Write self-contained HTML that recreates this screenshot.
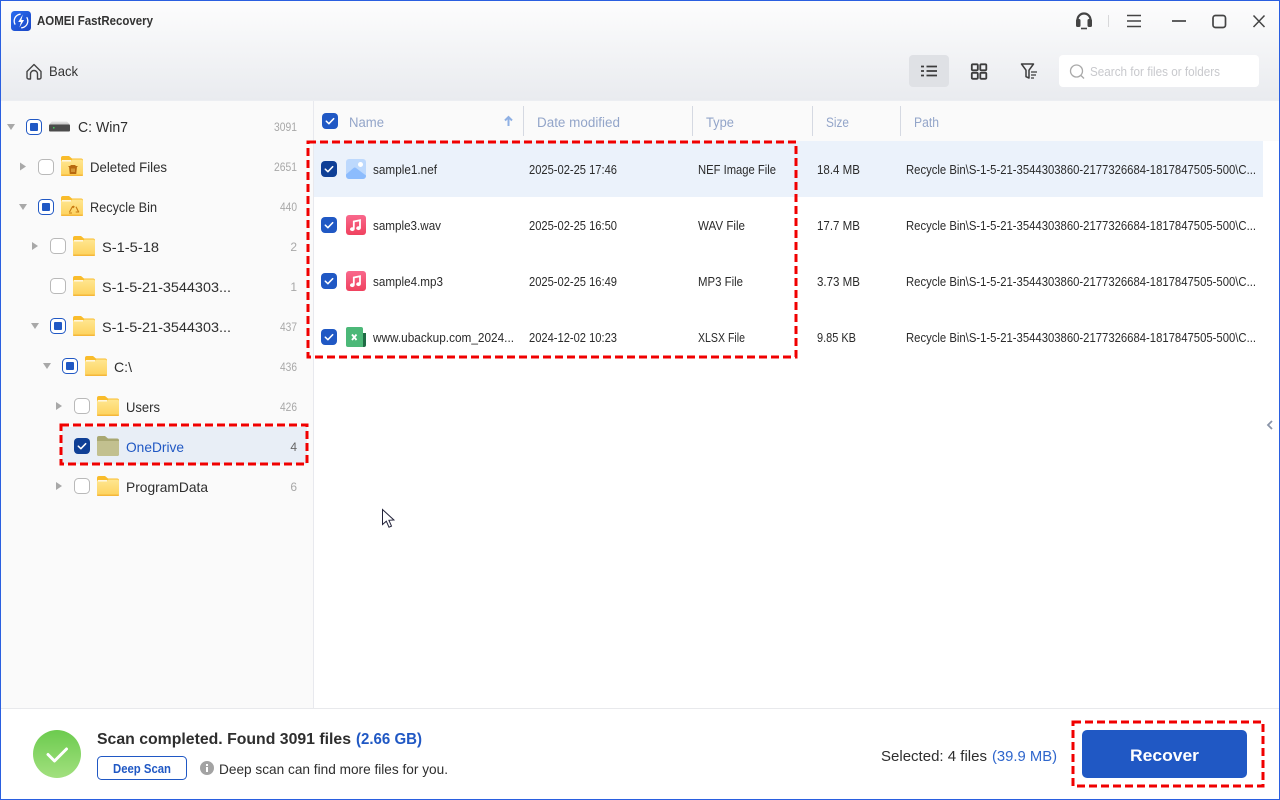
<!DOCTYPE html>
<html><head><meta charset="utf-8"><title>AOMEI FastRecovery</title>
<style>
html,body{margin:0;padding:0;width:1280px;height:800px;overflow:hidden;background:#fff}
svg{display:block}
text{font-family:"Liberation Sans",sans-serif;white-space:pre}
.t{font-size:14px;fill:#2e2e2e}
.c{font-size:12px;fill:#a8a8a8}
.f{font-size:12.500px;fill:#2b2b2b}
.h{font-size:13.500px;fill:#93a5c9}
</style></head><body>
<svg width="1280" height="800" viewBox="0 0 1280 800" xmlns="http://www.w3.org/2000/svg">
<defs>
<linearGradient id="hd" x1="0" y1="0" x2="0" y2="1"><stop offset="0" stop-color="#fdfdfd"/><stop offset="1" stop-color="#e9ebef"/></linearGradient>
<linearGradient id="fo" x1="0" y1="0" x2="0" y2="1"><stop offset="0" stop-color="#ffe690"/><stop offset="1" stop-color="#fdd25c"/></linearGradient>
<linearGradient id="mu" x1="0" y1="0" x2="0" y2="1"><stop offset="0" stop-color="#f9688c"/><stop offset="1" stop-color="#f0425f"/></linearGradient>
<linearGradient id="gr" x1="0" y1="0" x2="0" y2="1"><stop offset="0" stop-color="#6ccb4e"/><stop offset="1" stop-color="#a2e07e"/></linearGradient>
<linearGradient id="lg" x1="0" y1="0" x2="1" y2="1"><stop offset="0" stop-color="#2a6cf0"/><stop offset="1" stop-color="#1a45c4"/></linearGradient>
<linearGradient id="dr" x1="0" y1="0" x2="0" y2="1"><stop offset="0" stop-color="#e8e8e8"/><stop offset="1" stop-color="#c4c4c4"/></linearGradient>
<g id="folder">
<path d="M0 2a2 2 0 0 1 2-2h6l3 2.500h9a2 2 0 0 1 2 2v4H0z" fill="#f9bc2b"/>
<path d="M0 4.500h10l1.500-1H20a2 2 0 0 1 2 2V18a2 2 0 0 1-2 2H2a2 2 0 0 1-2-2z" fill="url(#fo)"/>
<rect x="1" y="4" width="9" height="1.500" fill="#fff" opacity=".8"/>
<rect x="0" y="18.500" width="22" height="1.500" rx=".7" fill="#f5b73a"/>
</g>
<g id="cbp"><rect x=".5" y=".5" width="15" height="15" rx="4" fill="#fff" stroke="#2058c4"/><rect x="4" y="4" width="8" height="8" rx="1" fill="#2058c4"/></g>
<g id="cbe"><rect x=".5" y=".5" width="15" height="15" rx="4" fill="#fff" stroke="#b9b9b9"/></g>
<g id="cbc"><rect width="16" height="16" rx="4" fill="#2058c4"/><path d="M4.300 8.200l2.600 2.500 4.800-5" fill="none" stroke="#fff" stroke-width="1.500" stroke-linecap="round" stroke-linejoin="round"/></g>
<g id="cbd"><rect width="16" height="16" rx="4" fill="#0e3f96"/><path d="M4.300 8.200l2.600 2.500 4.800-5" fill="none" stroke="#fff" stroke-width="1.500" stroke-linecap="round" stroke-linejoin="round"/></g>
<path id="tr" d="M0 0l6 4-6 4z" fill="#a8a8a8"/>
<path id="td" d="M0 0h8l-4 6z" fill="#a8a8a8"/>
<g id="music"><rect width="20" height="20" rx="3" fill="url(#mu)"/><path d="M7.800 14V6.500l6.200-1.300V13" fill="none" stroke="#fff" stroke-width="1.800"/><ellipse cx="6.300" cy="14.200" rx="2.300" ry="1.900" fill="#fff"/><ellipse cx="12.500" cy="13.200" rx="2.300" ry="1.900" fill="#fff"/></g>
</defs>

<rect width="1280" height="800" fill="#fff"/>
<rect width="1280" height="100" fill="url(#hd)"/>
<rect x="1" y="100" width="312" height="608" fill="#fafafa"/>
<rect x="313" y="100" width="1" height="608" fill="#e8e9ee"/>
<rect x="314" y="101" width="965" height="40" fill="#fafafa"/>
<rect x="1" y="100" width="1278" height="1" fill="#eceef2"/>
<rect x="314" y="141" width="949" height="56" fill="#ebf2fb"/>
<rect x="1" y="708" width="1278" height="1" fill="#e8e9ec"/>

<!-- title bar -->
<rect x="11" y="11" width="20" height="20" rx="3.500" fill="url(#lg)"/>
<circle cx="21" cy="21" r="6.800" fill="none" stroke="#fff" stroke-width="1.300" stroke-dasharray="14 7" transform="rotate(-30 21 21)"/>
<path d="M22.800 14.500l-4.600 7.500h2.700l-1.500 5.500 4.700-7.500h-2.700z" fill="#fff"/>
<text x="37" y="25" font-size="13" font-weight="700" fill="#333" textLength="116" lengthAdjust="spacingAndGlyphs">AOMEI FastRecovery</text>

<path d="M1077.500 23v-3a6.500 6.500 0 0 1 13 0v3" fill="none" stroke="#444" stroke-width="2.200"/>
<rect x="1076" y="19" width="4.500" height="8" rx="1.500" fill="#444"/><rect x="1087.500" y="19" width="4.500" height="8" rx="1.500" fill="#444"/>
<path d="M1081 28.500h6" stroke="#444" stroke-width="1.600"/>
<rect x="1108" y="15" width="1" height="12" fill="#d8d8da"/>
<path d="M1127 15.500h14M1127 21h14M1127 26.500h14" stroke="#444" stroke-width="1.500"/>
<path d="M1172 21h14" stroke="#444" stroke-width="1.700"/>
<rect x="1213" y="15.500" width="12.500" height="12" rx="2.500" fill="none" stroke="#444" stroke-width="1.700"/>
<path d="M1253.500 15.500l11 11.500M1264.500 15.500l-11 11.500" stroke="#444" stroke-width="1.500"/>

<!-- toolbar -->
<path d="M27 71.500l7-7 7 7v6a1.500 1.500 0 0 1-1.500 1.500H37.500v-5a3.500 3.500 0 0 0-7 0v5H28.500a1.500 1.500 0 0 1-1.500-1.500z" fill="none" stroke="#444" stroke-width="1.400" stroke-linejoin="round"/>
<text x="49" y="76" font-size="14" fill="#333" textLength="29" lengthAdjust="spacingAndGlyphs">Back</text>

<rect x="909" y="55" width="40" height="32" rx="4" fill="#dfe1e5"/>
<path d="M921 66.500h3M921 71h3M921 75.500h3" stroke="#3c3c3c" stroke-width="1.800"/>
<path d="M926.500 66.500h10.500M926.500 71h10.500M926.500 75.500h10.500" stroke="#3c3c3c" stroke-width="1.800"/>
<g fill="none" stroke="#3c3c3c" stroke-width="1.800"><rect x="971.800" y="64.300" width="6" height="6" rx="1"/><rect x="980.300" y="64.300" width="6" height="6" rx="1"/><rect x="971.800" y="72.800" width="6" height="6" rx="1"/><rect x="980.300" y="72.800" width="6" height="6" rx="1"/></g>
<path d="M1021.500 64h12l-4.500 6.200v7.800l-3-1.300v-6.500z" fill="none" stroke="#3c3c3c" stroke-width="1.500" stroke-linejoin="round"/>
<path d="M1031 72h6M1031 75h5M1031 78h3" stroke="#3c3c3c" stroke-width="1.300"/>
<rect x="1059" y="55" width="200" height="32" rx="4" fill="#fff"/>
<circle cx="1076.500" cy="71" r="6" fill="none" stroke="#a9a9a9" stroke-width="1.300"/><path d="M1081 75.500l3 3" stroke="#a9a9a9" stroke-width="1.300"/>
<text x="1090" y="76" font-size="12.500" fill="#c8c9cd" textLength="130" lengthAdjust="spacingAndGlyphs">Search for files or folders</text>

<!-- tree -->
<use href="#td" x="7" y="124"/>
<use href="#cbp" x="26" y="119"/>
<path d="M52 121.500h15l3 3H49z" fill="url(#dr)"/><rect x="49" y="124.500" width="21" height="7" rx="1" fill="#4c4c4c"/><rect x="53" y="127" width="1.500" height="1.500" fill="#3fd05a"/>
<text x="78" y="132" font-size="14.500" fill="#2e2e2e" textLength="50" lengthAdjust="spacingAndGlyphs">C: Win7</text>
<text x="274" y="131" class="c" textLength="23" lengthAdjust="spacingAndGlyphs">3091</text>

<use href="#tr" x="20" y="162.500"/>
<use href="#cbe" x="38" y="159"/>
<use href="#folder" x="61" y="156"/>
<path d="M68.500 166.500h9M71 166.500v-1h4v1M69.500 166.500l.7 7h5.600l.7-7" fill="#b8690f" stroke="#b8690f" stroke-width="1"/>
<path d="M72 168.500v3.500M74 168.500v3.500" stroke="#fdd76b" stroke-width=".8"/>
<text x="90" y="172" class="t" textLength="77" lengthAdjust="spacingAndGlyphs">Deleted Files</text>
<text x="274" y="171" class="c" textLength="23" lengthAdjust="spacingAndGlyphs">2651</text>

<use href="#td" x="19" y="204"/>
<use href="#cbp" x="38" y="199"/>
<use href="#folder" x="61" y="196"/>
<path d="M69.500 212l3-5.500 1 1.500M76 206.800l1.500 3 1.200 2.200h-3M72 213h-3M74.500 207l-1.500-1" fill="none" stroke="#c87a12" stroke-width="1.100" stroke-linejoin="round"/>
<text x="90" y="212" class="t" textLength="67" lengthAdjust="spacingAndGlyphs">Recycle Bin</text>
<text x="280" y="211" class="c" textLength="17" lengthAdjust="spacingAndGlyphs">440</text>

<use href="#tr" x="32" y="242"/>
<use href="#cbe" x="50" y="238"/>
<use href="#folder" x="73" y="236"/>
<text x="102" y="252" class="t" textLength="57" lengthAdjust="spacingAndGlyphs">S-1-5-18</text>
<text x="297" y="251" class="c" text-anchor="end">2</text>

<use href="#cbe" x="50" y="278"/>
<use href="#folder" x="73" y="276"/>
<text x="102" y="292" class="t" textLength="129" lengthAdjust="spacingAndGlyphs">S-1-5-21-3544303...</text>
<text x="297" y="291" class="c" text-anchor="end">1</text>

<use href="#td" x="31" y="323"/>
<use href="#cbp" x="50" y="318"/>
<use href="#folder" x="73" y="316"/>
<text x="102" y="332" class="t" textLength="129" lengthAdjust="spacingAndGlyphs">S-1-5-21-3544303...</text>
<text x="280" y="331" class="c" textLength="17" lengthAdjust="spacingAndGlyphs">437</text>

<use href="#td" x="43" y="363"/>
<use href="#cbp" x="62" y="358"/>
<use href="#folder" x="85" y="356"/>
<text x="114" y="372" class="t" textLength="18" lengthAdjust="spacingAndGlyphs">C:\</text>
<text x="280" y="371" class="c" textLength="17" lengthAdjust="spacingAndGlyphs">436</text>

<use href="#tr" x="56" y="402"/>
<use href="#cbe" x="74" y="398"/>
<use href="#folder" x="97" y="396"/>
<text x="126" y="412" class="t" textLength="34" lengthAdjust="spacingAndGlyphs">Users</text>
<text x="280" y="411" class="c" textLength="17" lengthAdjust="spacingAndGlyphs">426</text>

<rect x="62" y="427" width="245" height="37" fill="#e8eef6"/>
<use href="#cbd" x="74" y="438"/>
<path d="M97 438a2 2 0 0 1 2-2h6l3 2.500h9a2 2 0 0 1 2 2V454a2 2 0 0 1-2 2H99a2 2 0 0 1-2-2z" fill="#a9a872"/>
<path d="M97 441h22V454a2 2 0 0 1-2 2H99a2 2 0 0 1-2-2z" fill="#c2c08f"/>
<text x="126" y="452" class="t" style="fill:#2058c4" textLength="58" lengthAdjust="spacingAndGlyphs">OneDrive</text>
<text x="297" y="451" class="c" style="fill:#666" text-anchor="end">4</text>

<use href="#tr" x="56" y="482"/>
<use href="#cbe" x="74" y="478"/>
<use href="#folder" x="97" y="476"/>
<text x="126" y="492" class="t" textLength="82" lengthAdjust="spacingAndGlyphs">ProgramData</text>
<text x="297" y="491" class="c" text-anchor="end">6</text>

<!-- table header -->
<use href="#cbc" x="322" y="113"/>
<text x="349" y="127" class="h" textLength="35" lengthAdjust="spacingAndGlyphs">Name</text>
<path d="M508.500 126v-8M505 120.500l3.500-3.500 3.500 3.500" fill="none" stroke="#8fb0e4" stroke-width="2"/>
<g fill="#d5d9e2"><rect x="523" y="106" width="1" height="30"/><rect x="692" y="106" width="1" height="30"/><rect x="812" y="106" width="1" height="30"/><rect x="900" y="106" width="1" height="30"/></g>
<text x="537" y="127" class="h" textLength="83" lengthAdjust="spacingAndGlyphs">Date modified</text>
<text x="706" y="127" class="h" textLength="28" lengthAdjust="spacingAndGlyphs">Type</text>
<text x="826" y="127" class="h" textLength="23" lengthAdjust="spacingAndGlyphs">Size</text>
<text x="914" y="127" class="h" textLength="25" lengthAdjust="spacingAndGlyphs">Path</text>

<!-- rows -->
<use href="#cbd" x="321" y="161"/>
<rect x="346" y="159" width="20" height="20" rx="3" fill="#bdd9fd"/>
<path d="M346 174.500l7.500-6.500a2 2 0 0 1 2.500 0l10 7.500V176a3 3 0 0 1-3 3h-14a3 3 0 0 1-3-3z" fill="#8cbcfd"/><circle cx="360.500" cy="164.500" r="2.500" fill="#fff"/>
<text x="373" y="174" class="f" textLength="64" lengthAdjust="spacingAndGlyphs">sample1.nef</text>
<text x="529" y="174" class="f" textLength="88" lengthAdjust="spacingAndGlyphs">2025-02-25 17:46</text>
<text x="698" y="174" class="f" textLength="78" lengthAdjust="spacingAndGlyphs">NEF Image File</text>
<text x="817" y="174" class="f" textLength="43" lengthAdjust="spacingAndGlyphs">18.4 MB</text>
<text x="906" y="174" class="f" textLength="350" lengthAdjust="spacingAndGlyphs">Recycle Bin\S-1-5-21-3544303860-2177326684-1817847505-500\C...</text>

<use href="#cbc" x="321" y="217"/>
<use href="#music" x="346" y="215"/>
<text x="373" y="230" class="f" textLength="68" lengthAdjust="spacingAndGlyphs">sample3.wav</text>
<text x="529" y="230" class="f" textLength="88" lengthAdjust="spacingAndGlyphs">2025-02-25 16:50</text>
<text x="698" y="230" class="f" textLength="47" lengthAdjust="spacingAndGlyphs">WAV File</text>
<text x="817" y="230" class="f" textLength="43" lengthAdjust="spacingAndGlyphs">17.7 MB</text>
<text x="906" y="230" class="f" textLength="350" lengthAdjust="spacingAndGlyphs">Recycle Bin\S-1-5-21-3544303860-2177326684-1817847505-500\C...</text>

<use href="#cbc" x="321" y="273"/>
<use href="#music" x="346" y="271"/>
<text x="373" y="286" class="f" textLength="70" lengthAdjust="spacingAndGlyphs">sample4.mp3</text>
<text x="529" y="286" class="f" textLength="88" lengthAdjust="spacingAndGlyphs">2025-02-25 16:49</text>
<text x="698" y="286" class="f" textLength="45" lengthAdjust="spacingAndGlyphs">MP3 File</text>
<text x="817" y="286" class="f" textLength="43" lengthAdjust="spacingAndGlyphs">3.73 MB</text>
<text x="906" y="286" class="f" textLength="350" lengthAdjust="spacingAndGlyphs">Recycle Bin\S-1-5-21-3544303860-2177326684-1817847505-500\C...</text>

<use href="#cbc" x="321" y="329"/>
<path d="M360 333h6v12a2 2 0 0 1-2 2h-4z" fill="#1f6b45"/>
<path d="M348 327h13a2 2 0 0 1 2 2v18h-15a2 2 0 0 1-2-2v-16a2 2 0 0 1 2-2z" fill="#4cb878"/>
<path d="M352 334.500l4.500 5.500M356.500 334.500l-4.500 5.500" stroke="#fff" stroke-width="1.800"/>
<text x="373" y="342" class="f" textLength="141" lengthAdjust="spacingAndGlyphs">www.ubackup.com_2024...</text>
<text x="529" y="342" class="f" textLength="88" lengthAdjust="spacingAndGlyphs">2024-12-02 10:23</text>
<text x="698" y="342" class="f" textLength="47" lengthAdjust="spacingAndGlyphs">XLSX File</text>
<text x="817" y="342" class="f" textLength="39" lengthAdjust="spacingAndGlyphs">9.85 KB</text>
<text x="906" y="342" class="f" textLength="350" lengthAdjust="spacingAndGlyphs">Recycle Bin\S-1-5-21-3544303860-2177326684-1817847505-500\C...</text>

<path d="M1272 421l-4 4 4 4" fill="none" stroke="#8a94a8" stroke-width="1.800"/>

<!-- cursor -->
<path d="M382.500 509.500v15l3.800-3.300 2.700 6 2.500-1.100-2.600-5.800 5 -.3z" fill="#fff" stroke="#23233a" stroke-width="1"/>

<!-- footer -->
<circle cx="57" cy="754" r="24" fill="url(#gr)"/>
<path d="M48 754.500l6.500 6.500 12-12" fill="none" stroke="#fff" stroke-width="3" stroke-linecap="round" stroke-linejoin="round"/>
<text x="97" y="744" font-size="16" font-weight="700" fill="#2e2e2e" textLength="254" lengthAdjust="spacingAndGlyphs">Scan completed. Found 3091 files</text>
<text x="356" y="744" font-size="16" font-weight="700" fill="#2058c4" textLength="66" lengthAdjust="spacingAndGlyphs">(2.66 GB)</text>
<rect x="97.500" y="756.500" width="89" height="23" rx="4" fill="#fff" stroke="#2058c4"/>
<text x="113" y="773" font-size="13" font-weight="700" fill="#2058c4" textLength="58" lengthAdjust="spacingAndGlyphs">Deep Scan</text>
<circle cx="207" cy="768" r="7" fill="#a3a3a3"/>
<rect x="206" y="767" width="2" height="5" fill="#fff"/><rect x="206" y="764" width="2" height="2" fill="#fff"/>
<text x="219" y="774" font-size="14" fill="#2e2e2e" textLength="229" lengthAdjust="spacingAndGlyphs">Deep scan can find more files for you.</text>
<text x="881" y="761" font-size="15" fill="#2e2e2e" textLength="106" lengthAdjust="spacingAndGlyphs">Selected: 4 files</text>
<text x="992" y="761" font-size="15" fill="#2f66cc" textLength="65" lengthAdjust="spacingAndGlyphs">(39.9 MB)</text>
<rect x="1082" y="730" width="165" height="48" rx="5" fill="#2058c4"/>
<text x="1130" y="761" font-size="17" font-weight="700" fill="#fff" textLength="69" lengthAdjust="spacingAndGlyphs">Recover</text>

<!-- red dashed boxes -->
<g fill="none" stroke="#f00000" stroke-width="3" stroke-dasharray="8 4">
<rect x="308" y="142" width="488" height="215"/>
<rect x="61" y="425" width="246" height="39"/>
<rect x="1073" y="722" width="190" height="64"/>
</g>

<!-- window border -->
<g fill="#2a5fe0"><rect x="0" y="0" width="1280" height="1"/><rect x="0" y="0" width="1" height="800"/><rect x="1279" y="0" width="1" height="800"/><rect x="0" y="799" width="1280" height="1"/></g>
</svg>
</body></html>
